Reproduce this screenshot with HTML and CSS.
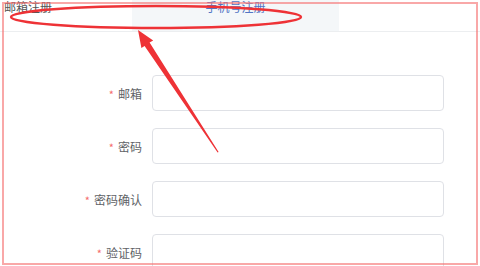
FILE: index.html
```html
<!DOCTYPE html>
<html lang="zh">
<head>
<meta charset="utf-8">
<title>注册</title>
<link rel="stylesheet" href="styles.css">
</head>
<body>
<div class="page">
  <div class="tabs">
    <div class="tab tab-email">邮箱注册</div>
    <div class="tab tab-phone">手机号注册</div>
    <div class="tab-rest"></div>
  </div>
  <form class="form">
    <div class="row">
      <label class="label"><span class="req">*</span>邮箱</label>
      <div class="input"></div>
    </div>
    <div class="row">
      <label class="label"><span class="req">*</span>密码</label>
      <div class="input"></div>
    </div>
    <div class="row">
      <label class="label"><span class="req">*</span>密码确认</label>
      <div class="input"></div>
    </div>
    <div class="row">
      <label class="label"><span class="req">*</span>验证码</label>
      <div class="input"></div>
    </div>
  </form>
  <div class="frame"></div>
  <svg class="annot" width="480" height="266" viewBox="0 0 480 266" xmlns="http://www.w3.org/2000/svg">
    <ellipse cx="156" cy="17" rx="145" ry="11" fill="none" stroke="#ee3236" stroke-width="2.4"/>
    <polygon fill="#ee3236" points="138,30 153.2,40.4 149.6,42.6 218.6,152 217.6,152.4 144.6,46 141.4,48"/>
  </svg>
</div>
</body>
</html>
```
FILE: styles.css
```css
html, body {
  margin: 0;
  padding: 0;
  background: #ffffff;
}
body {
  font-family: "Noto Sans CJK SC", "Noto Sans", sans-serif;
  font-size: 12px;
  color: #606266;
}
.page {
  position: relative;
  width: 480px;
  height: 266px;
  overflow: hidden;
}
.tabs {
  display: flex;
  height: 31px;
  border-bottom: 1px solid #eceef0;
}
.tab {
  font-size: 12px;
  line-height: 14px;
}
.tab-email {
  width: 128px;
  padding-left: 4px;
  color: #555555;
}
.tab-phone {
  width: 207px;
  background: #f4f7f9;
  color: #5274c4;
  text-align: center;
}
.tab-rest {
  flex: 1;
}
.form {
  display: flex;
  flex-direction: column;
  gap: 17px;
  margin: 43px 0 0 0;
}
.row {
  display: flex;
  align-items: center;
}
.label {
  width: 142px;
  padding-right: 10px;
  box-sizing: border-box;
  text-align: right;
  font-size: 12px;
  color: #606266;
  width: 152px;
}
.req {
  color: #f56c6c;
  font-size: 11px;
  margin-right: 4px;
}
.input {
  width: 292px;
  height: 36px;
  box-sizing: border-box;
  border: 1px solid #dfe1e6;
  border-radius: 4px;
  background: #ffffff;
}
.frame {
  position: absolute;
  left: 2px;
  top: 2px;
  width: 476px;
  height: 263px;
  box-sizing: border-box;
  border: 2px solid rgba(245, 110, 110, 0.6);
  pointer-events: none;
}
.annot {
  position: absolute;
  left: 0;
  top: 0;
  pointer-events: none;
}
```
